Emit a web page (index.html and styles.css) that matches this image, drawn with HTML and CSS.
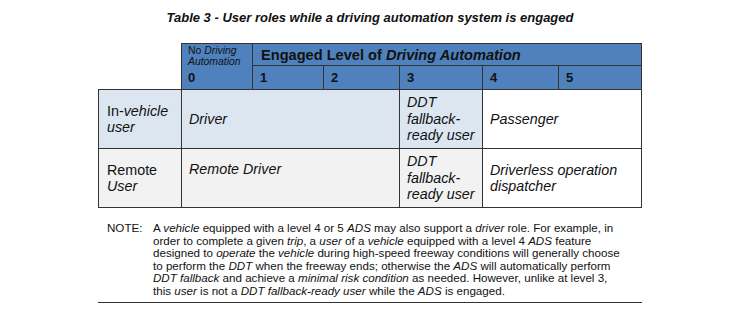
FILE: index.html
```html
<!DOCTYPE html>
<html>
<head>
<meta charset="utf-8">
<link rel="stylesheet" href="styles.css">
</head>
<body>
<div class="page">
  <h1 class="title">Table 3 - User roles while a driving automation system is engaged</h1>
  <table class="roles">
    <colgroup>
      <col class="c-label"><col class="c0"><col class="c1"><col class="c2"><col class="c3"><col class="c4"><col class="c5">
    </colgroup>
    <tr class="h1">
      <td class="empty" rowspan="2"></td>
      <th class="lvl0" rowspan="2"><div class="small">No <i>Driving</i><br><i>Automation</i></div><div class="num">0</div></th>
      <th class="engaged" colspan="5">Engaged Level of <i>Driving Automation</i></th>
    </tr>
    <tr class="h2">
      <th>1</th><th>2</th><th>3</th><th>4</th><th>5</th>
    </tr>
    <tr class="r1">
      <td class="lab">In-<i>vehicle</i><br><i>user</i></td>
      <td class="mid" colspan="3"><i>Driver</i></td>
      <td class="mid"><i>DDT<br>fallback-<br>ready user</i></td>
      <td class="white" colspan="2"><i>Passenger</i></td>
    </tr>
    <tr class="r2">
      <td class="lab">Remote<br><i>User</i></td>
      <td class="top" colspan="3"><i>Remote Driver</i></td>
      <td class="mid"><i>DDT<br>fallback-<br>ready user</i></td>
      <td class="white" colspan="2"><i>Driverless operation<br>dispatcher</i></td>
    </tr>
  </table>
  <div class="note">
    <div class="note-label">NOTE:</div>
    <p class="note-text">A <i>vehicle</i> equipped with a level 4 or 5 <i>ADS</i> may also support a <i>driver</i> role. For example, in<br>order to complete a given <i>trip</i>, a <i>user</i> of a <i>vehicle</i> equipped with a level 4 <i>ADS</i> feature<br>designed to <i>operate</i> the <i>vehicle</i> during high-speed freeway conditions will generally choose<br>to perform the <i>DDT</i> when the freeway ends; otherwise the <i>ADS</i> will automatically perform<br><i>DDT fallback</i> and achieve a <i>minimal risk condition</i> as needed. However, unlike at level 3,<br>this <i>user</i> is not a <i>DDT fallback-ready user</i> while the <i>ADS</i> is engaged.</p>
  </div>
</div>
</body>
</html>
```

FILE: styles.css
```css
html, body {
  margin: 0;
  padding: 0;
  background: #ffffff;
}
body {
  font-family: "Liberation Sans", Arial, sans-serif;
  color: #111;
}
.page {
  width: 740px;
  height: 325px;
  padding-top: 10px;
  box-sizing: border-box;
}
.title {
  margin: 0;
  text-align: center;
  font-size: 13px;
  font-weight: bold;
  font-style: italic;
  line-height: 16px;
}
.roles {
  margin: 17px 0 0 98px;
  border-collapse: collapse;
  table-layout: fixed;
  width: 543px;
  font-size: 14.3px;
}
.c-label { width: 83px; }
.c0 { width: 71px; }
.c1 { width: 71px; }
.c2 { width: 76px; }
.c3 { width: 83px; }
.c4 { width: 76px; }
.c5 { width: 83px; }
.roles td, .roles th {
  border: 1px solid #333;
  padding: 0 4px 0 7px;
  text-align: left;
  vertical-align: middle;
  white-space: nowrap;
}
.roles td.empty {
  border: none;
  border-bottom: 1px solid #333;
  background: #fff;
}
.roles th {
  background: #4f81bd;
  color: #111;
  font-weight: bold;
}
.h1 { height: 22px; }
.h2 { height: 24px; }
.roles th.engaged {
  font-size: 14.6px;
  padding-left: 8px;
}
.roles th.lvl0 {
  vertical-align: top;
  padding: 2px 2px 0 6px;
}
.small {
  font-size: 10.4px;
  font-weight: normal;
  line-height: 10.5px;
  height: 22px;
}
.num {
  font-size: 13px;
  line-height: 20px;
}
.h2 th {
  font-size: 13px;
}
.r1 { height: 59px; }
.r2 { height: 59px; }
.r1 td, .r2 td {
  line-height: 16.5px;
}
.r1 .lab, .r1 .mid { background: #dce6f1; }
.r2 .lab, .r2 .mid, .r2 .top { background: #f2f2f2; }
.roles td.white { background: #fff; }
.roles td.top { vertical-align: top; padding-top: 12px; }
.roles td.lab { padding-left: 8px; }
.note {
  display: flex;
  margin: 14px 0 0 98px;
  width: 544px;
  border-bottom: 1.5px solid #333;
  font-size: 11.6px;
  line-height: 12.6px;
  padding-bottom: 4px;
}
.note-label {
  width: 55px;
  padding-left: 9px;
  box-sizing: border-box;
}
.note-text {
  margin: 0;
  white-space: nowrap;
}
```
